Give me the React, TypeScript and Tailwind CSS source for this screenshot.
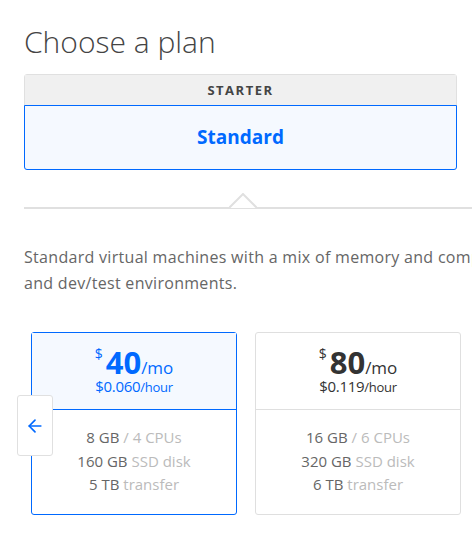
import { ArrowLeft } from "lucide-react";

const plans = [
  { price: "40", hour: "$0.060", mem: "8 GB", cpu: "4 CPUs", disk: "160 GB", transfer: "5 TB", active: true },
  { price: "80", hour: "$0.119", mem: "16 GB", cpu: "6 CPUs", disk: "320 GB", transfer: "6 TB", active: false },
];

function PlanCard({ plan }: { plan: (typeof plans)[number] }) {
  const on = plan.active;
  return (
    <div
      className={`flex h-[183px] w-[206px] shrink-0 flex-col rounded-[3px] border ${
        on ? "border-[#0069ff]" : "border-[#dfdfdf]"
      }`}
    >
      <div
        className={`flex h-[77px] flex-col items-center justify-center border-b ${
          on ? "border-[#0069ff] bg-[#f5f9ff] text-[#0069ff]" : "border-[#dfdfdf] text-[#333]"
        }`}
      >
        <div className="flex items-baseline leading-none">
          <span className="mr-[3px] self-start text-[14px]">$</span>
          <span className="text-[31px] font-bold leading-none">{plan.price}</span>
          <span className="text-[17px] leading-none">/mo</span>
        </div>
        <div className="mt-[-1px] text-[15px] leading-[18px] tracking-[-0.3px]">
          {plan.hour}
          <span className="text-[13px]">/hour</span>
        </div>
      </div>
      <div className="flex flex-1 flex-col items-center pt-[16px] text-[15px] leading-[23.5px] text-[#666]">
        <div>
          {plan.mem} <span className="text-[#bbb]">/ {plan.cpu}</span>
        </div>
        <div>
          {plan.disk} <span className="text-[#bbb]">SSD disk</span>
        </div>
        <div>
          {plan.transfer} <span className="text-[#bbb]">transfer</span>
        </div>
      </div>
    </div>
  );
}

export default function App() {
  return (
    <div className="h-[545px] w-[472px] overflow-hidden bg-white font-['Open_Sans',sans-serif] text-[#444]">
      <div className="w-[600px] pl-[24px] pt-[24px]">
        <h1 className="text-[30px] font-light leading-[36px] text-[#444]">Choose a plan</h1>

        <div className="mt-[14px] w-[433px] rounded-[3px] border border-[#e0e0e0]">
          <div className="flex h-[31px] items-center justify-center bg-[#f0f0f0] text-[13px] font-bold tracking-[1.5px] text-[#444]">
            STARTER
          </div>
          <div className="-m-px flex h-[65px] items-center justify-center rounded-b-[3px] border border-[#0069ff] bg-[#f5f9ff] text-[19px] font-bold text-[#0069ff]">
            Standard
          </div>
        </div>

        <div className="relative mt-[37px] h-[2px] bg-[#e0e0e0]">
          <svg
            className="absolute left-[205px] top-[-14px]"
            width="28"
            height="16"
            viewBox="0 0 28 16"
          >
            <polyline points="0,15 14,1 28,15" fill="white" stroke="#e0e0e0" strokeWidth="2" />
          </svg>
        </div>

        <p className="mt-[35px] w-[448px] overflow-hidden whitespace-nowrap text-[16px] leading-[26px] tracking-[0.3px] text-[#666]">
          Standard virtual machines with a mix of memory and compute resources. Best for small projects that can
          handle variable levels of CPU performance, like blogs, web apps
          <br />
          and dev/test environments.
        </p>

        <div className="relative mt-[36px] flex gap-[18px] pl-[7px]">
          {plans.map((p) => (
            <PlanCard key={p.price} plan={p} />
          ))}
          <button className="absolute left-[-7px] top-[63px] flex h-[61px] w-[36px] items-center justify-center rounded-[3px] border border-[#e0e0e0] bg-white text-[#0069ff]">
            <ArrowLeft size={20} strokeWidth={2} />
          </button>
        </div>
      </div>
    </div>
  );
}
